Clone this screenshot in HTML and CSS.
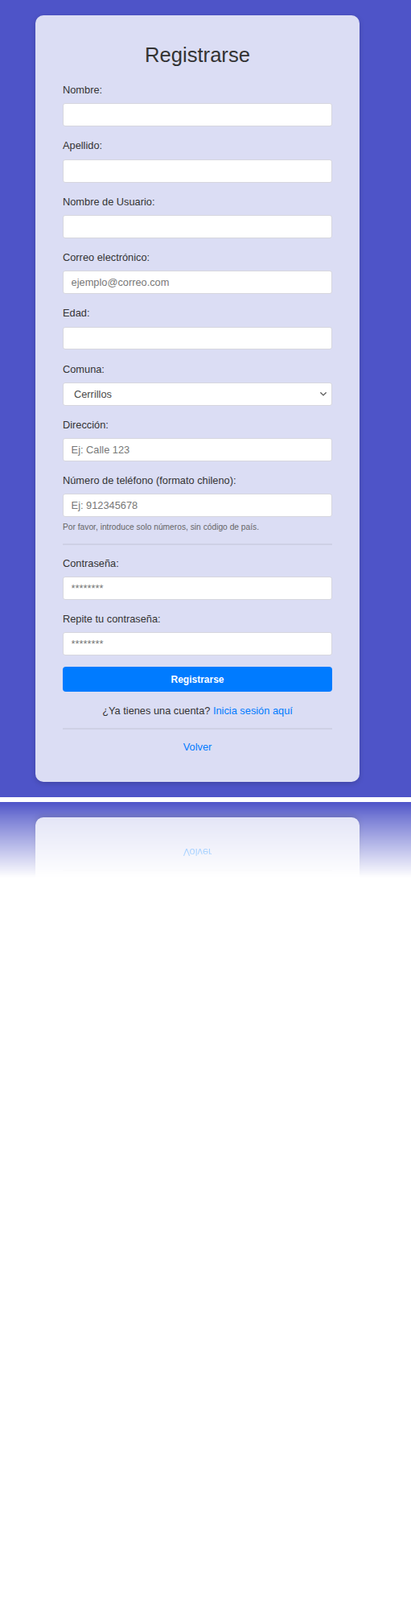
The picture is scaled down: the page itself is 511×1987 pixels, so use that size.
FILE: index.html
```html
<!DOCTYPE html>
<html lang="es">
<head>
<meta charset="utf-8">
<title>Registrarse</title>
<link rel="stylesheet" href="styles.css">
</head>
<body>
<div class="page">
  <div class="card">
    <h1 class="title">Registrarse</h1>
    <form class="form">
      <div class="group">
        <label class="label" for="nombre">Nombre:</label>
        <input class="field" id="nombre" type="text">
      </div>
      <div class="group">
        <label class="label" for="apellido">Apellido:</label>
        <input class="field" id="apellido" type="text">
      </div>
      <div class="group">
        <label class="label" for="usuario">Nombre de Usuario:</label>
        <input class="field" id="usuario" type="text">
      </div>
      <div class="group">
        <label class="label" for="correo">Correo electrónico:</label>
        <input class="field" id="correo" type="email" placeholder="ejemplo@correo.com">
      </div>
      <div class="group">
        <label class="label" for="edad">Edad:</label>
        <input class="field" id="edad" type="text">
      </div>
      <div class="group">
        <label class="label" for="comuna">Comuna:</label>
        <div class="select-wrap">
          <select class="field select" id="comuna">
            <option>Cerrillos</option>
            <option>Cerro Navia</option>
            <option>Conchalí</option>
          </select>
          <svg class="select-arrow" width="8" height="5" viewBox="0 0 8 5" aria-hidden="true">
            <path d="M0.8 0.8 L4 3.9 L7.2 0.8" fill="none" stroke="#555" stroke-width="1.3" stroke-linecap="round" stroke-linejoin="round"/>
          </svg>
        </div>
      </div>
      <div class="group">
        <label class="label" for="direccion">Dirección:</label>
        <input class="field" id="direccion" type="text" placeholder="Ej: Calle 123">
      </div>
      <div class="group group-phone">
        <label class="label" for="telefono">Número de teléfono (formato chileno):</label>
        <input class="field" id="telefono" type="tel" placeholder="Ej: 912345678">
        <small class="hint">Por favor, introduce solo números, sin código de país.</small>
      </div>
      <div class="divider"></div>
      <div class="group">
        <label class="label" for="pass">Contraseña:</label>
        <input class="field" id="pass" type="password" placeholder="********">
      </div>
      <div class="group group-last">
        <label class="label" for="pass2">Repite tu contraseña:</label>
        <input class="field" id="pass2" type="password" placeholder="********">
      </div>
      <button class="submit" type="button">Registrarse</button>
    </form>
    <p class="login">¿Ya tienes una cuenta? <a class="link" href="#">Inicia sesión aquí</a></p>
    <div class="divider divider-bottom"></div>
    <p class="back"><a class="link" href="#">Volver</a></p>
  </div>
</div>
<div class="reflection" aria-hidden="true">
  <div class="reflection-card">
    <p class="back back-mirror"><span class="link">Volver</span></p>
    <div class="divider reflection-divider"></div>
  </div>
</div>
</body>
</html>
```

FILE: styles.css
```css
* {
  box-sizing: border-box;
}

html,
body {
  margin: 0;
  padding: 0;
  background: #ffffff;
}

body {
  font-family: "Liberation Sans", Arial, sans-serif;
  color: #333333;
}

.page {
  height: 990px;
  padding-top: 19px;
  background: #4e54c8;
}

.card {
  width: 403px;
  margin-left: 44px;
  padding: 33.5px 34px 35.5px;
  background: rgba(255, 255, 255, 0.8);
  border-radius: 10px;
  box-shadow: 0 2px 6px rgba(0, 0, 0, 0.18);
}

.title {
  margin: 0 0 21.7px;
  font-size: 25.6px;
  line-height: 30px;
  font-weight: normal;
  text-align: center;
  color: #333333;
}

.form {
  margin: 0;
}

.group {
  margin-bottom: 16.2px;
}

.group-phone {
  margin-bottom: 14px;
}

.group-last {
  margin-bottom: 14px;
}

.label {
  display: block;
  margin-bottom: 9.3px;
  font-size: 12.8px;
  line-height: 15px;
  color: #333333;
}

.field {
  display: block;
  width: 100%;
  height: 28.8px;
  margin: 0;
  padding: 0 9.6px;
  font-family: "Liberation Sans", Arial, sans-serif;
  font-size: 12.8px;
  color: #444444;
  background: #ffffff;
  border: 1px solid #d6d6de;
  border-radius: 3px;
  outline: none;
}

.field::placeholder {
  color: #777777;
}

.select-wrap {
  position: relative;
}

.select {
  -webkit-appearance: none;
  appearance: none;
  padding-left: 13px;
  color: #4a4a4a;
}

.select-arrow {
  position: absolute;
  right: 7px;
  top: 12px;
  pointer-events: none;
}

.hint {
  display: block;
  margin-top: 6.4px;
  font-size: 10.24px;
  line-height: 12px;
  color: #666666;
}

.divider {
  height: 2px;
  margin: 0 0 15.2px;
  background: rgba(0, 0, 0, 0.06);
}

.submit {
  display: block;
  width: 100%;
  height: 31px;
  margin: 0;
  padding: 0;
  font-family: "Liberation Sans", Arial, sans-serif;
  font-size: 12px;
  font-weight: bold;
  color: #ffffff;
  background: #007bff;
  border: none;
  border-radius: 4px;
}

.login {
  margin: 15.5px 0 14px;
  font-size: 12.8px;
  line-height: 15px;
  text-align: center;
  color: #333333;
}

.divider-bottom {
  margin-bottom: 14.5px;
}

.back {
  margin: 0;
  font-size: 12.8px;
  line-height: 15px;
  text-align: center;
}

.link {
  color: #007bff;
  text-decoration: none;
}

.reflection {
  height: 100px;
  margin-top: 6px;
  padding-top: 19px;
  overflow: hidden;
  background: #4e54c8;
  -webkit-mask-image: linear-gradient(to bottom, #000000 0, rgba(0, 0, 0, 0.75) 20px, rgba(0, 0, 0, 0) 94px);
  mask-image: linear-gradient(to bottom, #000000 0, rgba(0, 0, 0, 0.75) 20px, rgba(0, 0, 0, 0) 94px);
}

.reflection-card {
  width: 403px;
  height: 81px;
  margin-left: 44px;
  padding: 35.5px 34px 0;
  background: rgba(255, 255, 255, 0.8);
  border-radius: 10px 10px 0 0;
  box-shadow: 0 -2px 6px rgba(0, 0, 0, 0.18);
}

.back-mirror {
  transform: scaleY(-1);
}

.reflection-divider {
  margin: 14.5px 0 0;
}
```
